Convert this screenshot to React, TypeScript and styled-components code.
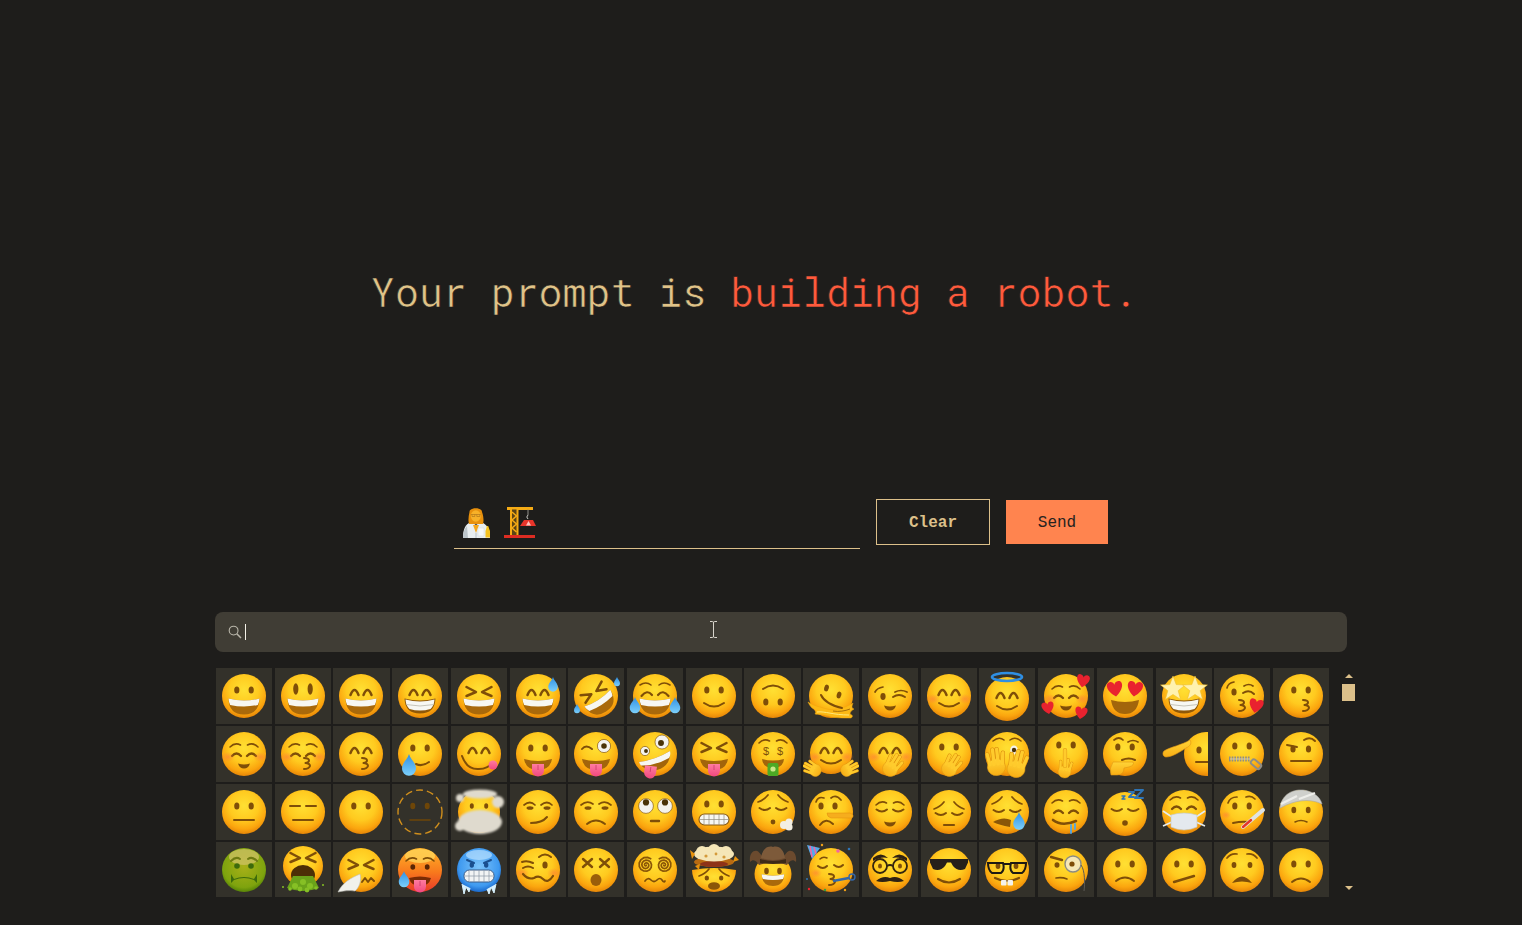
import React from "react";
import styled, { createGlobalStyle } from "styled-components";

const TAN = "#dcc08a";
const BROWN = "#7f4e08";

const GlobalStyle = createGlobalStyle`
  html, body {
    margin: 0;
    background: #1e1d1b;
  }
`;

const Page = styled.div`
  height: 925px;
  overflow: hidden;
  padding-top: 268px;
  box-sizing: border-box;
  background: #1e1d1b;
  position: relative;
`;

const Headline = styled.h1`
  margin: 0;
  padding-left: 371px;
  height: 48px;
  font: 400 40px/48px "Roboto Mono", "Liberation Mono", monospace;
  letter-spacing: -0.06px;
  color: #e0c388;
  white-space: pre;
  -webkit-text-stroke: 0.6px #1e1d1b;
`;

const Accent = styled.span`
  color: #ff5a3c;
`;

const Composer = styled.div`
  display: flex;
  align-items: flex-start;
  gap: 16px;
  margin-top: 183px;
  padding-left: 454px;
`;

const PromptField = styled.div`
  width: 406px;
  height: 50px;
  box-sizing: border-box;
  border-bottom: 1px solid ${TAN};
  display: flex;
  align-items: center;
  gap: 12px;
  padding: 0 0 3px 6px;
`;

const ActionButton = styled.button<{ $primary?: boolean }>`
  width: ${(p) => (p.$primary ? "102px" : "114px")};
  height: ${(p) => (p.$primary ? "44px" : "46px")};
  margin-top: ${(p) => (p.$primary ? "1px" : "0")};
  border: ${(p) => (p.$primary ? "none" : `1px solid ${TAN}`)};
  background: ${(p) => (p.$primary ? "#ff844f" : "transparent")};
  color: ${(p) => (p.$primary ? "#26231f" : TAN)};
  font: ${(p) => (p.$primary ? 400 : 700)} 16px "Liberation Mono", monospace;
  padding: 2px 0 0;
`;

const Picker = styled.div`
  width: 1132px;
  margin: 63px 0 0 215px;
`;

const SearchBar = styled.div`
  height: 40px;
  border-radius: 8px;
  background: #403d35;
  display: flex;
  align-items: center;
  gap: 3px;
  padding-left: 13px;
`;

const Caret = styled.span`
  width: 1px;
  height: 16px;
  background: #f4f1e8;
`;

const MouseCursor = styled.svg`
  position: absolute;
  left: 709px;
  top: 621px;
`;

const Tray = styled.div`
  display: flex;
  margin-top: 16px;
  padding-left: 1px;
  height: 229px;
`;

const EmojiGrid = styled.div`
  flex: none;
  width: 1113px;
  height: 229px;
  overflow: hidden;
  display: grid;
  grid-template-columns: repeat(19, 1fr);
  grid-auto-rows: 56px;
  column-gap: 2.67px;
  row-gap: 2px;
`;

const EmojiCell = styled.div`
  background: #33312a;
  display: flex;
  justify-content: center;
`;

const ScrollTrack = styled.div`
  flex: none;
  width: 13px;
  margin-left: 13px;
  display: flex;
  flex-direction: column;
  align-items: center;
  padding: 6px 0 7px;
  box-sizing: border-box;
`;

const ScrollArrow = styled.div<{ $down?: boolean }>`
  width: 0;
  height: 0;
  border-left: 4px solid transparent;
  border-right: 4px solid transparent;
  border-bottom: ${(p) => (p.$down ? "none" : `4px solid ${TAN}`)};
  border-top: ${(p) => (p.$down ? `4px solid ${TAN}` : "none")};
  margin-top: ${(p) => (p.$down ? "auto" : "0")};
`;

const ScrollThumb = styled.div`
  width: 13px;
  height: 17px;
  margin-top: 6px;
  background: ${TAN};
`;

// ---- drawing helpers for the emoji ----

const Face = ({ fill = "face", cx = 28, cy = 28, r = 22 }: { fill?: string; cx?: number; cy?: number; r?: number }) => (
  <circle cx={cx} cy={cy} r={r} fill={`url(#${fill})`} />
);

const Ln = ({ d, w = 2, c = BROWN }: { d: string; w?: number; c?: string }) => (
  <path d={d} fill="none" stroke={c} strokeWidth={w} strokeLinecap="round" strokeLinejoin="round" />
);

const Eyes = ({ y = 22, l = 20.8, r = 35.2, rx = 2.6, ry = 3.5, c = BROWN }: { y?: number; l?: number; r?: number; rx?: number; ry?: number; c?: string }) => (
  <>
    <ellipse cx={l} cy={y} rx={rx} ry={ry} fill={c} />
    <ellipse cx={r} cy={y} rx={rx} ry={ry} fill={c} />
  </>
);

const ArcEyes = () => (
  <>
    <Ln d="M17.5 27Q21.5 17 25.5 27" w={2.5} />
    <Ln d="M30.5 27Q34.5 17 38.5 27" w={2.5} />
  </>
);

// closed lids that curve upward, as on the blushing faces
const ArchEyes = ({ y = 30 }: { y?: number }) => (
  <>
    <Ln d={`M16 ${y}Q20.5 ${y - 5} 25 ${y}`} w={2.3} />
    <Ln d={`M31 ${y}Q35.5 ${y - 5} 40 ${y}`} w={2.3} />
  </>
);

// closed lids that curve downward, as on the relieved and pensive faces
const Closed = ({ y = 25.5 }: { y?: number }) => (
  <>
    <Ln d={`M14.5 ${y}Q20 ${y + 4} 25 ${y}`} w={2} />
    <Ln d={`M31 ${y}Q36 ${y + 4} 41.5 ${y}`} w={2} />
  </>
);

const Brows = ({ y = 21 }: { y?: number }) => (
  <>
    <Ln d={`M14 ${y}Q19 ${y - 5} 24.5 ${y - 2}`} w={1.6} />
    <Ln d={`M31.5 ${y - 2}Q37 ${y - 5} 42 ${y}`} w={1.6} />
  </>
);

const SadBrows = ({ y = 16 }: { y?: number }) => (
  <>
    <Ln d={`M13 ${y + 3}Q19 ${y + 1} 23 ${y - 4}`} w={1.7} />
    <Ln d={`M33 ${y - 4}Q37 ${y + 1} 43 ${y + 3}`} w={1.7} />
  </>
);

const Chevrons = ({ y = 24 }: { y?: number }) => (
  <>
    <Ln d={`M15.5 ${y - 5}L25 ${y}L15.5 ${y + 4}`} w={2.5} />
    <Ln d={`M40.5 ${y - 5}L31 ${y}L40.5 ${y + 4}`} w={2.5} />
  </>
);

const Cheeks = () => (
  <>
    <ellipse cx={12} cy={31} rx={7} ry={5} fill="url(#cheek)" />
    <ellipse cx={44} cy={31} rx={7} ry={5} fill="url(#cheek)" />
  </>
);

const Smile = () => <Ln d="M18 35Q28 42 38 35" />;
const TinySmile = () => <path d="M22 37.5Q28 39.5 34 37.5Q32.500 42.500 28 42.500Q23.500 42.500 22 37.500Z" fill={BROWN} />;
const Flat = ({ y = 36 }: { y?: number }) => <Ln d={`M18 ${y}H38`} />;
const Frown = ({ y = 38 }: { y?: number }) => <Ln d={`M19 ${y + 2}Q28 ${y - 5} 37 ${y + 2}`} />;

const OpenMouth = () => (
  <>
    <path d="M12.5 30.5Q28 34.5 43.5 30.5Q43 46.5 28 46.5Q13 46.5 12.5 30.5Z" fill="#a9690b" />
    <path d="M12.5 30.5Q28 34.5 43.5 30.5Q43.2 34.5 41.8 37Q28 40 14.2 37Q12.8 34.5 12.5 30.5Z" fill="#f7f7f2" />
  </>
);

const TeethMouth = () => (
  <>
    <path d="M12.5 30.5Q28 34.5 43.5 30.5Q43 45.5 28 45.5Q13 45.5 12.5 30.5Z" fill="#8f5809" />
    <path d="M13.5 31.5Q28 35.5 42.5 31.5Q42 38 38.5 41Q28 44 17.5 41Q14 38 13.5 31.5Z" fill="#f7f7f2" />
    <path d="M14 36.5Q28 39.5 42 36.5" fill="none" stroke="#b9b6ab" strokeWidth=".8" />
  </>
);

const Kiss = ({ x = 0 }: { x?: number }) => (
  <g transform={`translate(${x} 0)`}>
    <Ln d="M27 32Q32 32 32 34.5Q32 36.5 28.5 37Q33 37.5 33 40Q32 43 27 43" />
  </g>
);

const Tongue = ({ x = 28, y = 39, rot = 0 }: { x?: number; y?: number; rot?: number }) => (
  <g transform={`translate(${x} ${y}) rotate(${rot})`}>
    <path d="M-6 0H6V6.5A6 6 0 0 1-6 6.5Z" fill="url(#tongue)" />
    <path d="M0 1V6" stroke="#c93a68" strokeWidth=".8" />
  </g>
);

const TongueMouth = () => (
  <path d="M14 33Q28 37 42 33Q40 44 28 44Q16 44 14 33Z" fill="#a2650b" />
);

const Drop = ({ x, y, s = 1 }: { x: number; y: number; s?: number }) => (
  <g transform={`translate(${x} ${y}) scale(${s})`}>
    <path d="M0 0C1 4 5 6 5 10.5A5 5 0 1 1-5 10.5C-5 6-1 4 0 0Z" fill="url(#drop)" />
  </g>
);

const Heart = ({ x, y, s = 1, rot = 0 }: { x: number; y: number; s?: number; rot?: number }) => (
  <g transform={`translate(${x} ${y}) rotate(${rot}) scale(${s})`}>
    <path d="M0 6C-8 0-7-6-3.5-6C-1.5-6-.5-5 0-3.5C.5-5 1.5-6 3.5-6C7-6 8 0 0 6Z" fill="#e9222f" />
  </g>
);

const starPoints = (x: number, y: number, r: number) =>
  Array.from({ length: 10 }, (_, i) => {
    const a = (Math.PI / 5) * i - Math.PI / 2;
    const d = i % 2 ? r * 0.42 : r;
    return `${x + d * Math.cos(a)},${y + d * Math.sin(a)}`;
  }).join(" ");

const spiral = (x: number, y: number, r: number) => {
  let d = `M${x} ${y}`;
  for (let i = 1; i <= 36; i++) {
    const a = i * 0.5;
    const k = (r * i) / 36;
    d += `L${(x + k * Math.cos(a)).toFixed(1)} ${(y + k * Math.sin(a)).toFixed(1)}`;
  }
  return d;
};

const Hand = ({ x, y, rot = 0, s = 1 }: { x: number; y: number; rot?: number; s?: number }) => {
  const fingers = "M-6 1L-7.5-9M-2 1V-13M2 1V-13M6 1L7.5-9";
  return (
    <g transform={`translate(${x} ${y}) rotate(${rot}) scale(${s})`}>
      <path d={fingers} stroke="#d98a0c" strokeWidth="4.2" strokeLinecap="round" fill="none" />
      <ellipse cx="0" cy="4" rx="8.6" ry="8" fill="url(#hand)" stroke="#e09a14" strokeWidth=".6" />
      <path d={fingers} stroke="#ffcb2c" strokeWidth="3.2" strokeLinecap="round" fill="none" />
    </g>
  );
};

const BigEye = ({ x, y, r, px = 0, py = 0 }: { x: number; y: number; r: number; px?: number; py?: number }) => (
  <>
    <circle cx={x} cy={y} r={r} fill="#f4f3ee" stroke="#8a5a10" strokeWidth=".7" />
    <circle cx={x + px} cy={y + py} r={r * 0.42} fill="#4a3308" />
  </>
);

// ---- the 4 rows shown in the picker ----

const EMOJI: React.ReactNode[] = [
  // row 1
  <><Face /><Eyes /><OpenMouth /></>,
  <><Face /><Eyes y={21} ry={5.8} /><OpenMouth /></>,
  <><Face /><ArcEyes /><OpenMouth /></>,
  <><Face /><ArcEyes /><TeethMouth /></>,
  <><Face /><Chevrons /><OpenMouth /></>,
  <><Face /><ArcEyes /><OpenMouth /><Drop x={43} y={9} s={0.95} /></>,
  <>
    <Face />
    <g transform="rotate(-33 28 28)"><Chevrons /><OpenMouth /></g>
    <Drop x={9} y={36} s={0.6} />
    <Drop x={49} y={9} s={0.6} />
  </>,
  <>
    <Face />
    <Ln d="M13 17Q19 13 24 17" w={1.6} />
    <Ln d="M32 17Q37 13 43 17" w={1.6} />
    <Ln d="M14.5 28Q20 21 25 27" w={2.2} />
    <Ln d="M31 27Q36 21 41.5 28" w={2.2} />
    <OpenMouth />
    <Drop x={8} y={29} s={1.05} />
    <Drop x={48} y={29} s={1.05} />
  </>,
  <><Face /><Eyes /><Smile /></>,
  <><Face /><g transform="rotate(180 28 28)"><Eyes /><Smile /></g></>,
  <>
    <Face />
    <path d="M5 34C10 38 18 39 24 41C32 43 42 40 50 35C49 38 48 40 51 41C48 43 47 44 47 46C50 47 50 49 48 50C40 50 30 50 26 48C20 46 15 47 12 46C14 43 12 41 9 40C7 38 6 36 5 34Z" fill="#fcb915" stroke="#f1a60f" strokeWidth=".5" />
    <path d="M14 44C22 43 30 47 46 47" fill="none" stroke="#ffe979" strokeWidth="1" />
    <path d="M30 43C36 44 42 43 47 41" fill="none" stroke="#9c6508" strokeWidth=".9" />
    <ellipse cx="23.5" cy="20" rx="2.3" ry="3.4" fill={BROWN} transform="rotate(15 23.5 20)" />
    <ellipse cx="36" cy="27" rx="2.3" ry="3.4" fill={BROWN} transform="rotate(15 36 27)" />
    <Ln d="M18 27Q22 36 39 40" />
  </>,
  <>
    <Face />
    <Ln d="M13 24Q15 20 21 19" w={1.7} />
    <ellipse cx="21" cy="28.5" rx="2.6" ry="3.4" fill={BROWN} />
    <Ln d="M31 29Q37 25 43 29" w={2} />
    <Ln d="M33 24Q39 21 45 24" w={1.7} />
    <TinySmile />
  </>,
  <><Face /><ArcEyes /><Cheeks /><Smile /></>,
  <>
    <Face cy={31} />
    <ellipse cx="28" cy="9" rx="15" ry="4" fill="none" stroke="#2f8fe3" strokeWidth="2.6" />
    <g transform="translate(0 3)"><ArcEyes /><Smile /></g>
  </>,
  <>
    <Face />
    <Brows />
    <ArchEyes />
    <Cheeks />
    <TinySmile />
    <Heart x={45} y={13} s={1.05} rot={10} />
    <Heart x={10} y={40} s={1} rot={-10} />
    <Heart x={43} y={45} s={1} rot={10} />
  </>,
  <>
    <Face />
    <path d="M14 32Q28 36 42 32Q40 46 28 46Q16 46 14 32Z" fill="#a2650b" />
    <Heart x={18} y={21} s={1.25} rot={-8} />
    <Heart x={38} y={21} s={1.25} rot={8} />
  </>,
  <>
    <Face />
    <TeethMouth />
    <polygon points={starPoints(17, 21, 13)} fill="#fff2ae" stroke="#f0bd2c" strokeWidth=".6" />
    <polygon points={starPoints(39, 21, 13)} fill="#fff2ae" stroke="#f0bd2c" strokeWidth=".6" />
  </>,
  <>
    <Face />
    <Ln d="M13 20Q14 15 20 14" w={1.7} />
    <ellipse cx="20" cy="24" rx="2.6" ry="3.5" fill={BROWN} />
    <Ln d="M29 25Q35 21 40 26" />
    <Ln d="M30 18Q35 15 39 18" w={1.7} />
    <Kiss x={-2} />
    <Heart x={42} y={38} s={1.15} rot={12} />
  </>,
  <><Face /><Eyes /><Kiss x={3} /></>,

  // row 2
  <><Face /><Brows /><ArchEyes /><Cheeks /><TinySmile /></>,
  <><Face /><Brows /><ArchEyes /><Cheeks /><Kiss x={2} /></>,
  <><Face /><ArcEyes /><Kiss x={2} /></>,
  <>
    <Face />
    <Eyes />
    <Ln d="M24 38Q30 41 37 36" />
    <Drop x={17} y={28} s={1.4} />
  </>,
  <>
    <Face />
    <ArcEyes />
    <Ln d="M11 30Q16 44 28 43Q37 43 42 36" />
    <circle cx="42" cy="39" r="4.5" fill="url(#tongue)" />
  </>,
  <><Face /><Eyes /><TongueMouth /><Tongue y={38} /></>,
  <>
    <Face />
    <Ln d="M14 23Q18 18 24 23" />
    <BigEye x={36} y={20} r={6.6} />
    <TongueMouth />
    <Tongue y={38} />
  </>,
  <>
    <Face />
    <BigEye x={35} y={16} r={7} px={-1} py={1} />
    <BigEye x={18} y={25} r={4.6} px={1} />
    <path d="M12 36Q28 34 43 25Q44 40 30 44Q17 46 12 36Z" fill="#a2650b" />
    <path d="M12 36Q28 34 43 25Q44 29 42 32Q28 40 14 39.5Q12.8 38 12 36Z" fill="#f7f7f2" />
    <Tongue x={24} y={40} rot={8} />
  </>,
  <><Face /><Chevrons y={22} /><TongueMouth /><Tongue y={38} /></>,
  <>
    <Face />
    <Brows y={17} />
    <text x="21" y="29" fontFamily="Liberation Sans, sans-serif" fontSize="11" textAnchor="middle" fill={BROWN}>$</text>
    <text x="35" y="29" fontFamily="Liberation Sans, sans-serif" fontSize="11" textAnchor="middle" fill={BROWN}>$</text>
    <path d="M17 33Q28 36 39 33Q38 42 28 42Q18 42 17 33Z" fill="#a2650b" />
    <rect x="22.5" y="37" width="11" height="13" rx="2" fill="#4caa25" />
    <circle cx="28" cy="43" r="2.6" fill="#c9e88a" />
  </>,
  <>
    <Face r={21} cy={27} />
    <ArcEyes />
    <Cheeks />
    <Ln d="M18 34Q28 41 38 34" />
    <Hand x={10} y={43} rot={-62} s={0.72} />
    <Hand x={46} y={43} rot={62} s={0.72} />
  </>,
  <>
    <Face />
    <ArcEyes />
    <Cheeks />
    <Hand x={30} y={40} rot={32} s={0.9} />
  </>,
  <>
    <Face />
    <Eyes y={21} />
    <Hand x={30} y={40} rot={32} s={0.9} />
  </>,
  <>
    <Face />
    <Ln d="M14 15Q20 10 25 14" w={1.6} />
    <Ln d="M31 14Q36 10 42 15" w={1.6} />
    <ellipse cx="35" cy="24" rx="3.8" ry="4.6" fill="#f4f3ee" />
    <circle cx="35" cy="24" r="2.2" fill="#4a3308" />
    <Hand x={17} y={37} rot={-6} s={1.05} />
    <Hand x={38} y={39} rot={14} s={1.05} />
  </>,
  <>
    <Face />
    <Eyes y={19} />
    <Hand x={27} y={43} rot={10} s={0.75} />
    <path d="M27 24V40" stroke="#e39a12" strokeWidth="4.2" strokeLinecap="round" />
    <path d="M27 24V40" stroke="#ffcb2c" strokeWidth="3.2" strokeLinecap="round" />
  </>,
  <>
    <Face />
    <Ln d="M17 14Q22 10 26 14" w={1.7} />
    <Ln d="M31 16Q36 13 41 16" w={1.7} />
    <Eyes y={21} />
    <Ln d="M25 34Q32 31 38 34" />
    <path d="M16 36H36Q38 39 32 41L27 42Q27 49 20 49H14Q12 42 16 36Z" fill="url(#hand)" stroke="#df9412" strokeWidth=".6" />
  </>,
  <>
    <g clipPath="url(#saluteClip)">
      <g transform="translate(22 0)">
        <Face />
        <ellipse cx="21" cy="24" rx="2.6" ry="3.5" fill={BROWN} />
        <Flat y={36} />
      </g>
    </g>
    <path d="M8 25C14 21 26 19 34 14C36 18 34 20 30 22C24 26 16 31 10 31C7 31 6 27 8 25Z" fill="url(#hand)" stroke="#df9412" strokeWidth=".6" />
  </>,
  <>
    <Face />
    <Eyes y={20} />
    <path d="M15 33H36" stroke="#8f8d86" strokeWidth="5" strokeDasharray="1.6 1.1" />
    <path d="M16 33H36" stroke="#ccc9bf" strokeWidth="1" />
    <g transform="rotate(40 41 37)">
      <rect x="37" y="34.5" width="11" height="5.5" rx="2" fill="none" stroke="#8f8d86" strokeWidth="2" />
    </g>
  </>,
  <>
    <Face />
    <Ln d="M14 19L24 21" />
    <Ln d="M31 14Q37 10 42 15" />
    <Eyes y={23} l={20} r={35.5} />
    <Flat y={35} />
  </>,

  // row 3
  <><Face /><Eyes /><Flat /></>,
  <><Face /><Ln d="M15 22H25" /><Ln d="M31 22H41" /><Flat /></>,
  <><Face /><Eyes /></>,
  <>
    <circle cx="28" cy="28" r="22" fill="none" stroke="#cf8e1c" strokeWidth="1.4" strokeDasharray="7 4" />
    <Eyes rx={2.5} ry={3.2} c="#6e4608" />
    <Ln d="M18 36H38" w={1.6} c="#6e4608" />
  </>,
  <>
    <Face r={21} />
    <Eyes y={22} rx={2} ry={2.8} />
    <g filter="url(#soft)" fill="#dfdace">
      <ellipse cx="29" cy="10" rx="17" ry="4.5" />
      <ellipse cx="29" cy="38" rx="22" ry="12" />
      <circle cx="47" cy="18" r="6" />
      <circle cx="9" cy="14" r="4" />
      <circle cx="9" cy="42" r="5" />
    </g>
  </>,
  <>
    <Face />
    <Ln d="M14 21Q20 16 25 21" w={1.7} />
    <Ln d="M31 21Q37 16 42 21" w={1.7} />
    <ellipse cx="20" cy="24" rx="3.5" ry="1.8" fill={BROWN} />
    <ellipse cx="37" cy="24" rx="3.5" ry="1.8" fill={BROWN} />
    <Ln d="M21 39Q32 39 37 33" />
  </>,
  <>
    <Face />
    <Ln d="M13 21Q19 16 25 20" w={1.7} />
    <Ln d="M31 20Q37 16 43 21" w={1.7} />
    <ellipse cx="20" cy="24" rx="3.5" ry="1.8" fill={BROWN} />
    <ellipse cx="37" cy="24" rx="3.5" ry="1.8" fill={BROWN} />
    <Frown y={38} />
  </>,
  <>
    <Face />
    <BigEye x={19} y={22} r={7.4} py={-3.6} />
    <BigEye x={38} y={22} r={7.4} py={-3.6} />
    <Ln d="M24 37H32" w={2.4} />
  </>,
  <>
    <Face />
    <Eyes y={20} />
    <rect x="13" y="30" width="30" height="11" rx="5.5" fill="#f7f7f2" stroke="#8a5a10" strokeWidth="1.1" />
    <path d="M13 35.5H43M18 30.5V40.5M23 30V41M28 30V41M33 30V41M38 30.5V40.5" stroke="#8f8c80" strokeWidth=".7" />
  </>,
  <>
    <Face />
    <SadBrows y={15} />
    <Closed y={24} />
    <circle cx="28" cy="38" r="2.4" fill={BROWN} />
    <g fill="#f3efe3">
      <circle cx="39" cy="41" r="4" />
      <circle cx="44" cy="38" r="3.6" />
      <circle cx="44" cy="43" r="3.6" />
    </g>
  </>,
  <>
    <Face />
    <Ln d="M13 18Q15 12 21 14" w={1.7} />
    <Ln d="M28 14Q33 10 38 16" w={1.7} />
    <Eyes y={22} l={18} r={32} />
    <Ln d="M17 41Q23 33 30 40" />
    <path d="M24 29H47Q52 31 49 34H28Q24 33 24 29Z" fill="#f6ad1d" stroke="#e08c0c" strokeWidth=".5" />
  </>,
  <><Face /><Brows /><Closed y={25.5} /><TinySmile /></>,
  <><Face /><SadBrows y={22} /><Closed y={29} /><Ln d="M23 41H33" w={2.2} /></>,
  <>
    <Face />
    <SadBrows y={17} />
    <Closed y={26} />
    <path d="M14 38Q24 32 32 36L31 43Q20 41 14 38Z" fill="#8a5608" />
    <Drop x={40} y={28} s={1.15} />
  </>,
  <>
    <Face />
    <Brows y={19} />
    <ArchEyes y={29} />
    <Ln d="M15 36Q24 43 38 37" w={2.6} />
    <path d="M33 41V49M37 40V45" stroke="#4fa6e8" strokeWidth="1.8" strokeLinecap="round" />
  </>,
  <>
    <Face cy={30} />
    <Closed y={25} />
    <circle cx="28" cy="39" r="2.8" fill={BROWN} />
    <Ln d="M32 8H37L32 13H37" w={1.8} c="#2f74b5" />
    <Ln d="M38 6H46L38 14H46" w={2} c="#2f74b5" />
    <Ln d="M25 12H28L25 15H28" w={1.4} c="#2f74b5" />
  </>,
  <>
    <Face />
    <Brows y={16} />
    <ArchEyes y={25} />
    <path d="M7 27L16 33M49 27L40 33M7 42L16 38M49 42L40 38" stroke="#e6ecef" strokeWidth="1.6" />
    <path d="M15 31Q28 27 41 31V43Q28 49 15 43Z" fill="#e4e9ee" stroke="#bfc8cf" strokeWidth=".6" />
  </>,
  <>
    <Face />
    <Ln d="M14 19Q16 13 23 13" w={1.7} />
    <Ln d="M32 13Q37 11 41 15" w={1.7} />
    <Eyes y={22} />
    <ellipse cx="12" cy="31" rx="5" ry="4" fill="url(#cheek)" />
    <Ln d="M19 39Q28 37 34 38" />
    <path d="M29 43L49 26" stroke="#dfe3e3" strokeWidth="4" strokeLinecap="round" />
    <path d="M29 43L37 36" stroke="#e5352a" strokeWidth="2.4" strokeLinecap="round" />
  </>,
  <>
    <Face />
    <path d="M7 24C8 12 18 5 30 6C39 7 47 12 49 20C36 14 22 16 7 24Z" fill="#cfd0cc" stroke="#a9aaa6" strokeWidth=".6" />
    <path d="M8 20L24 12M26 15L42 9" stroke="#eeeeea" strokeWidth="2.4" />
    <Eyes y={26} rx={2.4} ry={3.2} />
    <Ln d="M22 38Q28 35 34 38" w={1.6} />
  </>,

  // row 4
  <>
    <Face fill="green" />
    <ellipse cx="28" cy="15" rx="15" ry="8" fill="#cfc266" opacity=".75" />
    <Ln d="M15 19Q20 14 24 17" c="#6f7b12" />
    <Ln d="M32 17Q36 14 41 19" c="#6f7b12" />
    <circle cx="21" cy="24" r="2.8" fill="#3c6a0c" />
    <circle cx="35" cy="24" r="2.8" fill="#3c6a0c" />
    <path d="M15 32L18 37Q28 33 38 37L41 32L41 41L38 38Q28 34 18 38L15 41Z" fill="#3c6a0c" />
  </>,
  <>
    <Face cy={24} r={20} />
    <Chevrons y={16} />
    <ellipse cx="28" cy="33" rx="12" ry="10" fill="#4c2f06" />
    <path d="M18 34H38L44 46Q28 52 12 46Z" fill="#6aa31a" />
    <g fill="#86c025">
      <circle cx="20" cy="44" r="3" /><circle cx="28" cy="40" r="3" /><circle cx="35" cy="44" r="3" />
      <circle cx="25" cy="47" r="2.4" /><circle cx="32" cy="48" r="2.4" /><circle cx="41" cy="46" r="1.8" />
      <circle cx="15" cy="47" r="1.8" /><circle cx="8" cy="45" r="1" /><circle cx="48" cy="43" r="1" />
    </g>
  </>,
  <>
    <Face />
    <Chevrons y={23} />
    <Ln d="M29 40L32 36L35 40L38 36L41 39" />
    <path d="M5 50C10 40 18 36 27 32C29 38 26 46 22 49C16 48 10 49 5 50Z" fill="#f1f1ec" stroke="#bcbcb6" strokeWidth=".6" />
  </>,
  <>
    <Face fill="hot" />
    <ellipse cx="28" cy="14" rx="15" ry="7" fill="#ffd257" opacity=".8" />
    <Brows y={19} />
    <Eyes y={25} rx={2.4} ry={2.8} c="#5b2604" />
    <path d="M17 36Q28 33 39 36Q37 44 28 44Q19 44 17 36Z" fill="#7a2b05" />
    <Tongue y={38} />
    <Drop x={12} y={29} s={1.05} />
  </>,
  <>
    <Face fill="cold" />
    <ellipse cx="28" cy="13" rx="13" ry="5" fill="#bfe3ff" opacity=".65" />
    <Ln d="M16 18L23 21" c="#1a4f8f" />
    <Ln d="M40 18L33 21" c="#1a4f8f" />
    <Eyes y={23} rx={2.2} ry={2.8} c="#1a4f8f" />
    <rect x="13" y="28" width="30" height="12" rx="5.5" fill="#f2f4f4" stroke="#3a5c88" />
    <path d="M13 34H43M18 28.5V39.5M23 28V40M28 28V40M33 28V40M38 28.5V39.5" stroke="#8a96a3" strokeWidth=".7" />
    <path d="M11 42L13 52L15 45L18 50L19 46M36 47L38 52L40 45L43 51L45 42" fill="#d7f1fd" stroke="#d7f1fd" strokeWidth="1" />
  </>,
  <>
    <Face />
    <Cheeks />
    <Ln d="M12 20Q17 18 23 21" />
    <Ln d="M13 26Q18 23 23 26" />
    <Ln d="M29 15Q35 10 41 15" />
    <ellipse cx="35" cy="23" rx="2.6" ry="3.6" fill={BROWN} />
    <Ln d="M13 32Q18 38 24 36Q29 33 33 37Q38 42 43 34" w={2.2} />
  </>,
  <>
    <Face />
    <Ln d="M15 17L24 25M24 17L15 25" w={2.4} />
    <Ln d="M32 17L41 25M41 17L32 25" w={2.4} />
    <ellipse cx="28" cy="38" rx="5.5" ry="6" fill="#9a5e0a" />
  </>,
  <>
    <Face />
    <path d={spiral(19, 23, 8)} fill="none" stroke="#8a5608" strokeWidth="1.7" />
    <path d={spiral(37, 23, 8)} fill="none" stroke="#8a5608" strokeWidth="1.7" transform="matrix(-1 0 0 1 74 0)" />
    <Ln d="M18 39Q21 35 24 38T30 38T35 38T38 39" w={1.7} />
  </>,
  <>
    <path d="M6 28A22 22 0 0 0 50 28Q28 24 6 28Z" fill="url(#face)" />
    <ellipse cx="28" cy="20" rx="20" ry="5" fill="#b86a12" />
    <ellipse cx="28" cy="22" rx="14" ry="3" fill="#8e3318" />
    <g fill="#f5e6b7">
      <ellipse cx="28" cy="12" rx="20" ry="7.5" />
      <circle cx="16" cy="10" r="6" /><circle cx="28" cy="8" r="6" /><circle cx="40" cy="10" r="6" />
    </g>
    <g fill="#d49a3a">
      <circle cx="20" cy="14" r="1.6" /><circle cx="30" cy="12" r="1.4" /><circle cx="38" cy="15" r="1.6" />
    </g>
    <g fill="#e8920c">
      <path d="M4 8L9 12L6 17Z" /><path d="M49 14L53 18L47 20Z" /><path d="M9 24L14 22L13 28Z" />
    </g>
    <SadBrows y={31} />
    <Eyes y={36} rx={2.2} ry={2.6} />
    <ellipse cx="28" cy="44" rx="6" ry="3.8" fill="#8a5608" />
  </>,
  <>
    <Face cy={32} r={18.5} />
    <path d="M5 20C4 12 8 8 12 9C16 10 15 17 28 17C41 17 40 10 44 9C48 8 52 12 51 20C47 16 44 20 42 23C33 20 23 20 14 23C12 20 9 16 5 20Z" fill="#6b4a2e" />
    <path d="M16 16C17 8 22 3 28 5C34 3 39 8 40 16Q28 20 16 16Z" fill="#7d5a3a" />
    <path d="M15 17Q28 21 41 17V21Q28 23 15 21Z" fill="#3d2a18" />
    <Eyes y={29} l={21.5} r={34.5} rx={2.3} ry={3.3} />
    <g transform="translate(7.5 10) scale(.73)"><OpenMouth /></g>
  </>,
  <>
    <Face />
    <Ln d="M15 24Q20 28 24 24" />
    <Ln d="M31 23Q36 27 40 23" />
    <Ln d="M17 17Q20 14 24 16" w={1.6} />
    <Kiss x={-1} />
    <ellipse cx="13" cy="31" rx="6" ry="4.5" fill="url(#cheek)" />
    <path d="M4 3L17 6L9 17Z" fill="#55a9e8" />
    <path d="M7 4L9 15M11 5L13 12" stroke="#f266a3" strokeWidth="1.4" />
    <path d="M30 39L46 36" stroke="#3467a8" strokeWidth="2.4" />
    <circle cx="49" cy="35" r="3" fill="none" stroke="#3467a8" strokeWidth="1.4" />
    <g>
      <circle cx="35" cy="9" r="1.8" fill="#f266a3" />
      <circle cx="46" cy="7" r="1.3" fill="#2f74b5" />
      <circle cx="19" cy="3" r="1.2" fill="#f0a018" />
      <circle cx="6" cy="47" r="1.2" fill="#e9222f" />
      <circle cx="22" cy="48" r="1.2" fill="#38a13c" />
      <circle cx="4" cy="37" r="1" fill="#2f74b5" />
      <circle cx="42" cy="48" r="1.2" fill="#f0a018" />
    </g>
  </>,
  <>
    <Face />
    <path d="M11 16Q19 9 26 16Q19 14 11 19ZM30 16Q37 9 45 16V19Q37 14 30 16Z" fill="#2e2113" />
    <circle cx="18" cy="24" r="7" fill="none" stroke="#33250f" strokeWidth="1.8" />
    <circle cx="38" cy="24" r="7" fill="none" stroke="#33250f" strokeWidth="1.8" />
    <path d="M25 24Q28 22 31 24" stroke="#33250f" strokeWidth="1.8" fill="none" />
    <Eyes y={24} l={18} r={38} rx={2} ry={2.6} />
    <path d="M14 39Q21 33 28 36Q35 33 42 39Q36 41 28 39Q20 41 14 39Z" fill="#2e2113" />
  </>,
  <>
    <Face />
    <path d="M9 17H47V20.5L44 27Q37 30 32 24L30 20.5H26L24 24Q19 30 12 27L9 20.5Z" fill="#26201a" />
    <Ln d="M17 37Q28 44 39 37" w={2.2} />
  </>,
  <>
    <Face />
    <Eyes y={24} rx={2.4} ry={3} l={19} r={37} />
    <path d="M9 21H24Q26 28 22 31H13Q9 28 9 21ZM32 21H47Q47 28 43 31H34Q30 28 32 21ZM24 22H32" fill="none" stroke="#1e1a14" strokeWidth="2" />
    <Ln d="M16 36Q28 42 40 36" w={2.2} />
    <rect x="22" y="38" width="5.5" height="5.5" rx="1" fill="#f4f3ee" />
    <rect x="28.5" y="38" width="5.5" height="5.5" rx="1" fill="#f4f3ee" />
  </>,
  <>
    <Face />
    <Ln d="M13 15L24 18" w={2.4} />
    <ellipse cx="19" cy="23" rx="2.5" ry="2.8" fill={BROWN} />
    <Ln d="M18 36Q24 35 29 37" w={1.6} />
    <circle cx="35" cy="22" r="8" fill="#f6e8b6" stroke="#8c8c84" strokeWidth="1.4" />
    <circle cx="34" cy="22" r="2.6" fill={BROWN} />
    <path d="M43 23C47 28 47 42 46 49" stroke="#5c5a55" strokeWidth="1" fill="none" />
  </>,
  <><Face /><Eyes /><Frown y={37} /></>,
  <><Face /><Eyes /><Ln d="M18 40L38 34" w={2.4} /></>,
  <>
    <Face />
    <Ln d="M13 16Q17 11 23 12" w={1.7} />
    <Ln d="M33 12Q39 11 43 16" w={1.7} />
    <Eyes y={23} rx={2.4} ry={3} l={20} r={36} />
    <path d="M18 41Q28 28 38 41Q28 38 18 41Z" fill={BROWN} />
  </>,
  <><Face /><Eyes /><Frown y={38} /></>,
];

const Scientist = () => (
  <svg width="32" height="32" viewBox="0 0 32 32">
    <path d="M3 32C3 24 5 18 11 16L16 19L21 16C27 18 30 24 30 32Z" fill="#e9eef0" />
    <path d="M3 32C3 27 4 23 7 20L8 32Z" fill="#bcc5ca" />
    <path d="M13 19L16 27L19 19Z" fill="#f4a71d" />
    <path d="M16 27V32" stroke="#aab2b7" strokeWidth=".8" />
    <path d="M9.5 6C9.5 1 22 1 22 6C23.5 10 24 15 23 18H9C8 15 8.5 10 9.5 6Z" fill="#e8900c" />
    <ellipse cx="15.8" cy="10" rx="5" ry="5.8" fill="#f7b128" />
    <path d="M11 8.5H20.6M12 8.5V10.5H14.8V8.5M16.8 8.5V10.5H19.8V8.5" stroke="#a8701a" strokeWidth=".6" fill="none" />
    <path d="M25.5 25L27 20H28.2L30 25V31.5H25.5Z" fill="#f5c21f" />
    <path d="M18 22H24V30H18Z" fill="#f6f8f8" stroke="#cdd3d6" strokeWidth=".4" />
  </svg>
);

const Crane = () => (
  <svg width="32" height="32" viewBox="0 0 32 32" overflow="visible">
    <rect x="0" y="29" width="31" height="3" fill="#dd2c22" />
    <rect x="3" y="1" width="26" height="3" fill="#f5ab15" />
    <rect x="6" y="3.5" width="8.5" height="25.5" fill="#f5ab15" />
    <rect x="8" y="3.5" width="4.5" height="25.5" fill="#5c4414" />
    <path d="M8 6L12.5 10L8 14L12.5 18L8 22L12.5 26" stroke="#f5ab15" strokeWidth="1.5" fill="none" />
    <path d="M24 3.5V9" stroke="#8f8f8a" strokeWidth="1" />
    <path d="M24 9Q21.5 11 24 13" stroke="#c9c9c4" strokeWidth="1" fill="none" />
    <path d="M20 14H29L32 20H16Z" fill="#e8342a" />
    <path d="M22 19.5L24.5 15L27 19.5Z" fill="#ffc2bc" />
  </svg>
);

const App = () => {
  return (
    <Page>
      <GlobalStyle />
      <svg width="0" height="0" style={{ position: "absolute" }}>
        <defs>
          <radialGradient id="face" cx="50%" cy="36%" r="66%">
            <stop offset="0" stopColor="#ffe033" />
            <stop offset=".5" stopColor="#ffca1f" />
            <stop offset=".8" stopColor="#fba50e" />
            <stop offset="1" stopColor="#e28006" />
          </radialGradient>
          <radialGradient id="green" cx="50%" cy="42%" r="56%">
            <stop offset="0" stopColor="#a8b018" />
            <stop offset=".85" stopColor="#7ea30e" />
            <stop offset="1" stopColor="#5e8a08" />
          </radialGradient>
          <linearGradient id="hot" x1="0" y1="0" x2="0" y2="1">
            <stop offset="0" stopColor="#ffb52a" />
            <stop offset=".55" stopColor="#f8791c" />
            <stop offset="1" stopColor="#e8392a" />
          </linearGradient>
          <radialGradient id="cold" cx="50%" cy="42%" r="56%">
            <stop offset="0" stopColor="#7cc4fb" />
            <stop offset=".8" stopColor="#3f9af0" />
            <stop offset="1" stopColor="#1f6fd1" />
          </radialGradient>
          <linearGradient id="drop" x1="0" y1="0" x2="0" y2="1">
            <stop offset="0" stopColor="#2f8fe3" />
            <stop offset="1" stopColor="#7cd0fb" />
          </linearGradient>
          <linearGradient id="tongue" x1="0" y1="0" x2="0" y2="1">
            <stop offset="0" stopColor="#ff7ca0" />
            <stop offset="1" stopColor="#f0487f" />
          </linearGradient>
          <linearGradient id="hand" x1="0" y1="0" x2="0" y2="1">
            <stop offset="0" stopColor="#ffd437" />
            <stop offset="1" stopColor="#f8ae14" />
          </linearGradient>
          <radialGradient id="cheek">
            <stop offset="0" stopColor="#ff7d3a" stopOpacity=".6" />
            <stop offset="1" stopColor="#ff7d3a" stopOpacity="0" />
          </radialGradient>
          <filter id="soft" x="-20%" y="-20%" width="140%" height="140%">
            <feGaussianBlur stdDeviation="1.1" />
          </filter>
          <clipPath id="saluteClip">
            <rect x="0" y="0" width="52" height="56" />
          </clipPath>
        </defs>
      </svg>

      <Headline>
        Your prompt is <Accent>building a robot.</Accent>
      </Headline>

      <Composer>
        <PromptField>
          <Scientist />
          <Crane />
        </PromptField>
        <ActionButton>Clear</ActionButton>
        <ActionButton $primary>Send</ActionButton>
      </Composer>

      <Picker>
        <SearchBar>
          <svg width="14" height="14" viewBox="0 0 14 14" fill="none" stroke="#b9b6aa" strokeWidth="1.1">
            <circle cx="5.6" cy="5.6" r="4.4" />
            <path d="M8.8 8.8L13 13" strokeWidth="1.5" />
          </svg>
          <Caret />
        </SearchBar>
        <Tray>
          <EmojiGrid>
            {EMOJI.map((art, i) => (
              <EmojiCell key={i}>
                <svg width="56" height="56" viewBox="0 0 56 56">
                  {art}
                </svg>
              </EmojiCell>
            ))}
          </EmojiGrid>
          <ScrollTrack>
            <ScrollArrow />
            <ScrollThumb />
            <ScrollArrow $down />
          </ScrollTrack>
        </Tray>
      </Picker>

      <MouseCursor width="9" height="17" viewBox="0 0 9 17" fill="none" stroke="#d8d5cc" strokeWidth="1">
        <path d="M1 .5H3.5Q4.500.5 4.500 2V15Q4.500 16.500 3.500 16.500H1M8 .5H5.500Q4.500.5 4.500 2M4.500 15Q4.500 16.500 5.500 16.500H8" />
      </MouseCursor>
    </Page>
  );
};

export default App;
